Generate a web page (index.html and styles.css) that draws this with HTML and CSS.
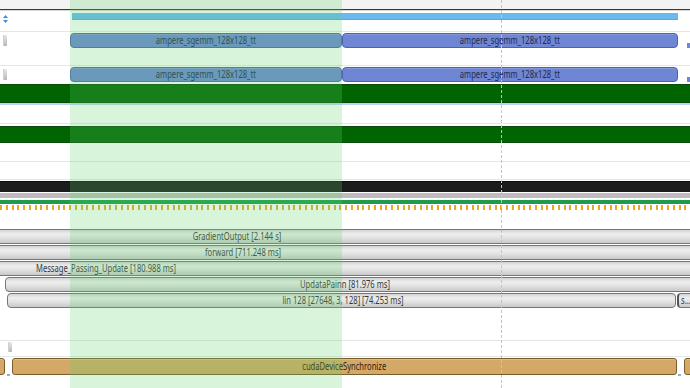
FILE: index.html
```html
<!DOCTYPE html>
<html>
<head>
<meta charset="utf-8">
<link rel="stylesheet" href="styles.css">
</head>
<body>
<div class="timeline">
  <div class="header"></div>

  <div class="row row-a">
    <svg class="ico ico-arrows" width="5" height="8" viewBox="0 0 5 8"><path d="M2.5 0 L5 3 H0 Z M2.5 8 L0 5 H5 Z" fill="#3a8fe0"/></svg>
    <div class="bar cpu-line" style="left:72px;width:606px"></div>
  </div>

  <div class="row row-b">
    <span class="ico ico-bars"></span>
    <div class="bar kernel" style="left:70px;width:272px"><span class="txt">ampere_sgemm_128x128_tt</span></div>
    <div class="bar kernel" style="left:342px;width:336px"><span class="txt">ampere_sgemm_128x128_tt</span></div>
    <div class="bar kernel-bit" style="left:687px;width:4px"></div>
  </div>

  <div class="row row-c">
    <span class="ico ico-bars"></span>
    <div class="bar kernel" style="left:70px;width:272px"><span class="txt">ampere_sgemm_128x128_tt</span></div>
    <div class="bar kernel" style="left:342px;width:336px"><span class="txt">ampere_sgemm_128x128_tt</span></div>
    <div class="bar kernel-bit" style="left:687px;width:4px"></div>
  </div>

  <div class="band green-band"></div>
  <div class="band blue-line"></div>
  <div class="row row-d"></div>
  <div class="band green-band green-2"></div>
  <div class="row row-e"></div>
  <div class="row row-f"></div>
  <div class="band black-band"></div>
  <div class="band grey-line"></div>
  <div class="band green-line"></div>
  <div class="band ticks"></div>

  <div class="nvtx-area">
    <div class="nvtx-row"><div class="bar nvtx" style="left:-200px;width:900px"><span class="lbl" style="left:436px">GradientOutput [2.144 s]</span></div></div>
    <div class="nvtx-row"><div class="bar nvtx" style="left:-200px;width:900px"><span class="lbl" style="left:442px">forward [711.248 ms]</span></div></div>
    <div class="nvtx-row"><div class="bar nvtx" style="left:-80px;width:800px"><span class="lbl" style="left:185px">Message_Passing_Update [180.988 ms]</span></div></div>
    <div class="nvtx-row"><div class="bar nvtx" style="left:5px;width:700px"><span class="lbl" style="left:339px">UpdataPainn [81.976 ms]</span></div></div>
    <div class="nvtx-row">
      <div class="bar nvtx" style="left:7px;width:669px"><span class="lbl" style="left:335px">lin 128 [27648, 3, 128] [74.253 ms]</span></div>
      <div class="bar nvtx small" style="left:677px;width:30px"><span class="txt-l">s...</span></div>
    </div>
  </div>

  <div class="row row-g"></div>
  <div class="row row-h"><span class="ico ico-bars ico-h"></span></div>

  <div class="row row-i">
    <div class="bar cuda cuda-l" style="left:-6px;width:11px"></div>
    <div class="bar cuda" style="left:12px;width:665px"><span class="txt">cudaDeviceSynchronize</span></div>
    <div class="bar cuda cuda-r" style="left:684px;width:12px"></div>
    <div class="bar mark" style="left:7px;width:3px"></div>
    <div class="bar mark" style="left:678px;width:3px"></div>
  </div>

  <div class="selection"></div>
  <div class="cursor"></div>
</div>
</body>
</html>
```

FILE: styles.css
```css
html, body {
  margin: 0;
  padding: 0;
  background: #ffffff;
  overflow: hidden;
}

.timeline {
  position: relative;
  width: 690px;
  height: 388px;
  overflow: hidden;
  font-family: "Noto Sans", "Open Sans", sans-serif;
  font-size: 10px;
  display: flex;
  flex-direction: column;
  background: #ffffff;
}

.header {
  height: 10px;
  flex: none;
  box-sizing: border-box;
  background: #f3f3f3;
  border-bottom: 1px solid #3a3a3a;
  box-shadow: 0 1px 0 #d8d8d8;
}

.row {
  position: relative;
  flex: none;
  box-sizing: border-box;
  border-bottom: 1px solid #e6e6e6;
}

.row-a { height: 22px; }
.row-b { height: 34px; }
.row-c { height: 18px; border-bottom: none; }
.row-d { height: 19px; }
.row-e { height: 19px; }
.row-f { height: 18px; }
.row-g { height: 33px; }
.row-h { height: 16px; }
.row-i { height: 20px; border-bottom: none; }

.band { flex: none; box-sizing: border-box; }

.green-band {
  height: 19px;
  background: #006400;
  border-top: 1px solid #0a4a0a;
  border-bottom: 1px solid #0a4a0a;
}
.green-2 { height: 17px; margin-top: 2px; }

.blue-line { height: 2px; background: #b9d3ec; }

.black-band {
  height: 11px;
  margin-top: 1px;
  background: #1c1c1c;
  border-top: 1px solid #0c0c0c;
}

.grey-line { height: 5px; margin-top: 1px; background: #bdbdbd; }

.green-line { height: 4px; margin-top: 2px; background: #1e9a4c; }

.ticks {
  height: 5px;
  margin-top: 1px;
  background: repeating-linear-gradient(to right, #f0a320 0 2px, transparent 2px 5.75px);
}

.nvtx-area {
  flex: none;
  margin-top: 19px;
  display: flex;
  flex-direction: column;
  gap: 1px;
}

.nvtx-row {
  position: relative;
  height: 15px;
}

.bar {
  position: absolute;
  box-sizing: border-box;
  white-space: nowrap;
  overflow: hidden;
}

.txt {
  display: inline-block;
  transform: scaleX(0.76);
}

.txt-l {
  display: inline-block;
  transform: scaleX(0.76);
  transform-origin: left center;
}

.cpu-line {
  top: 3px;
  height: 7px;
  background: #6cb9f0;
  border-bottom: 1px solid #5aa8e0;
}

.kernel {
  top: 1px;
  height: 15px;
  background: #6f86d4;
  border: 1px solid #4e63ad;
  border-radius: 4px;
  color: #1f2a4a;
  text-align: center;
  line-height: 13px;
  box-shadow: inset 0 1px 0 #8598dc;
}

.kernel-bit {
  top: 11px;
  height: 5px;
  background: #6f86d4;
}

.nvtx {
  top: 0;
  height: 15px;
  border: 1px solid #777777;
  border-radius: 4px;
  background: linear-gradient(#d2d2d2, #eeeeee 30%, #e2e2e2 60%, #c9c9c9);
  color: #383838;
  line-height: 13px;
}

.lbl {
  position: absolute;
  top: 0;
  transform: translateX(-50%) scaleX(0.76);
}

.nvtx.small {
  padding-left: 2px;
  border-left: 2px solid #555;
}

.cuda {
  top: 1px;
  height: 17px;
  background: #d4a866;
  border: 1px solid #7b5c2c;
  border-radius: 3px;
  color: #2e220c;
  text-align: center;
  line-height: 15px;
  box-shadow: inset 0 1px 0 #e2bd80;
}

.mark {
  top: 17px;
  height: 2px;
  background: #8ab0e0;
}

.ico {
  position: absolute;
  left: 3px;
}
.ico-arrows { top: 5px; }
.ico-bars {
  top: 3px;
  width: 3px;
  height: 11px;
  background: linear-gradient(#e8e8e8, #b8b8b8);
  border-left: 1px solid #d0d0d0;
}
.ico-h { left: 8px; top: 1px; height: 10px; }

.selection {
  position: absolute;
  left: 70px;
  top: 0;
  width: 272px;
  height: 388px;
  background: rgba(92, 213, 109, 0.24);
  pointer-events: none;
}

.cursor {
  position: absolute;
  left: 501px;
  top: 0;
  width: 0;
  height: 388px;
  border-left: 1px dashed #c4c4c4;
  pointer-events: none;
}
```
